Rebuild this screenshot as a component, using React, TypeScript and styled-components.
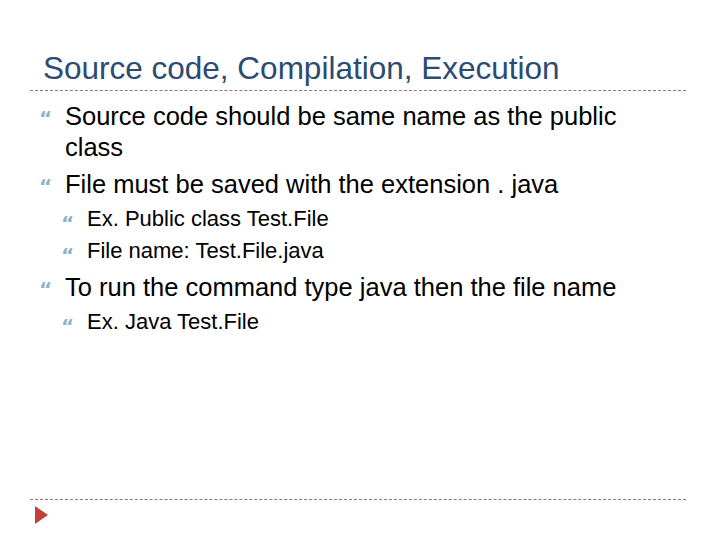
import React from "react";
import styled, { createGlobalStyle } from "styled-components";

const Global = createGlobalStyle`
  html, body { margin: 0; padding: 0; background: #fff; }
  body { font-family: "Liberation Sans", Arial, sans-serif; }
`;

const Slide = styled.div`
  width: 720px; height: 540px; position: relative; overflow: hidden;
  display: flex; flex-direction: column;
`;
const Title = styled.h1`
  margin: 0; padding: 50px 0 0 43px; height: 40px;
  font-weight: normal; font-size: 31.5px; line-height: 36px; color: #2b4b72;
`;
const Rule = styled.div`
  margin: 0 34px 0 30px;
  border-top: 1px dashed #a07070;
`;
const List = styled.ul`
  list-style: none; margin: 0; padding: 10px 0 0 0; height: 398px;
`;
const Item = styled.li<{ $level: number; $gap: number }>`
  position: relative;
  margin-top: ${p => p.$gap}px;
  padding-left: ${p => (p.$level === 1 ? 65 : 87)}px;
  padding-right: 70px;
  font-size: ${p => (p.$level === 1 ? 25.5 : 22)}px;
  line-height: ${p => (p.$level === 1 ? 31 : 32)}px;
  color: #000;
`;
const Bullet = styled.span<{ $level: number }>`
  position: absolute;
  left: ${p => (p.$level === 1 ? 39 : 61)}px;
  top: ${p => (p.$level === 1 ? 2 : 4)}px;
  font-family: "DejaVu Sans", sans-serif;
  font-size: 20px; font-weight: bold; color: #8fb3cc;
`;
const Arrow = styled.div`
  margin: 6px 0 0 35px; width: 0; height: 0;
  border-top: 9px solid transparent; border-bottom: 9px solid transparent;
  border-left: 13px solid #c0403a;
`;

const items: [number, number, string][] = [
  [1, 0, "Source code should be same name as the public class"],
  [1, 6, "File must be saved with the extension . java"],
  [2, 2.5, "Ex. Public class Test.File"],
  [2, 0, "File name: Test.File.java"],
  [1, 5.5, "To run the command type java then the file name"],
  [2, 2.5, "Ex. Java Test.File"],
];

export default function App() {
  return (
    <Slide>
      <Global />
      <Title>Source code, Compilation, Execution</Title>
      <Rule />
      <List>
        {items.map(([l, g, t], i) => (
          <Item key={i} $level={l} $gap={g}>
            <Bullet $level={l}>“</Bullet>
            {t}
          </Item>
        ))}
      </List>
      <Rule />
      <Arrow />
    </Slide>
  );
}
